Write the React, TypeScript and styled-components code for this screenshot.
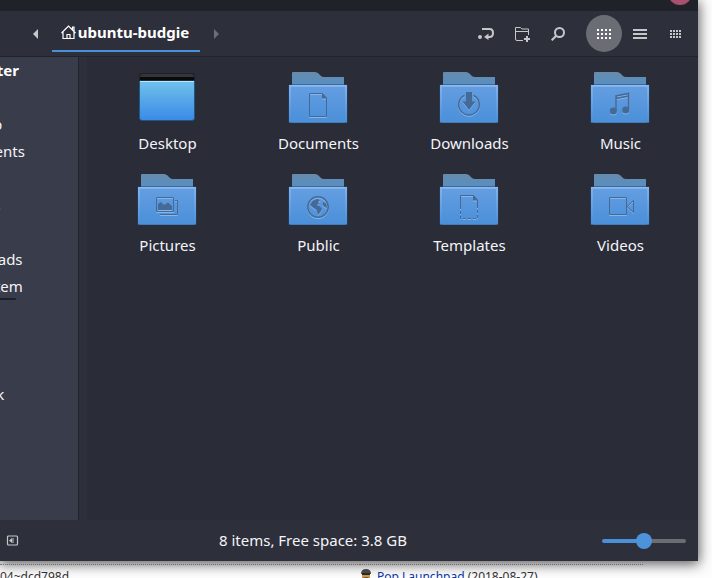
import React, { useState } from "react";
import styled, { createGlobalStyle } from "styled-components";

const GlobalStyle = createGlobalStyle`
  * { box-sizing: border-box; }
  html, body { margin: 0; height: 100%; overflow: hidden; background: #fdfdfd; }
  body { font-family: "Noto Sans", "Open Sans", sans-serif; font-size: 15px; line-height: 21px; color: #f4f5f8; }
  button { border: 0; padding: 0; background: none; color: inherit; font: inherit; }
`;

const Screen = styled.div`
  height: 100vh;
  display: flex;
  flex-direction: column;
  overflow: hidden;
`;

const Window = styled.main`
  flex: 1;
  min-height: 0;
  margin-right: 14px;
  display: flex;
  flex-direction: column;
  background: #2a2c37;
  box-shadow: 0 2px 12px 1px rgba(0, 0, 0, 0.65);
  z-index: 1;
`;

const TitleBar = styled.header`
  height: 11px;
  flex: none;
  display: flex;
  justify-content: flex-end;
  align-items: flex-end;
  padding: 0 6px 6px 0;
  overflow: hidden;
  background: #20222a;
`;

const CloseButton = styled.button`
  flex: none;
  width: 24px;
  height: 24px;
  border-radius: 50%;
  background: #a9506f;
`;

const Toolbar = styled.nav`
  flex: none;
  height: 46px;
  display: flex;
  padding: 0 4px 0 20px;
  background: #2d2f3a;
  border-bottom: 1px solid #21232b;
`;

const ArrowButton = styled.button<{ $dim?: boolean }>`
  width: 32px;
  display: flex;
  align-items: center;
  justify-content: center;
  color: ${(p) => (p.$dim ? "#6c6e75" : "#c6c7ca")};
`;

const PathTab = styled.button`
  height: 41px;
  width: 148px;
  display: flex;
  align-items: center;
  justify-content: center;
  gap: 2px;
  padding: 4px 2px 0 0;
  border-bottom: 2px solid #4a90d9;
  font-weight: 700;
  color: #fff;
`;

const Tools = styled.div`
  margin-left: auto;
  display: flex;
  align-items: center;
`;

const ToolButton = styled.button<{ $active?: boolean }>`
  width: 36px;
  height: 37px;
  display: flex;
  align-items: center;
  justify-content: center;
  border-radius: 50%;
  color: ${(p) => (p.$active ? "#fff" : "#c6c7ca")};
  background: ${(p) => (p.$active ? "#6b6d75" : "transparent")};
`;

const ViewGroup = styled.div`
  display: flex;
  margin-left: 10px;
`;

const Body = styled.div`
  flex: 1;
  min-height: 0;
  display: flex;
`;

const Sidebar = styled.aside`
  width: 79px;
  flex: none;
  overflow: hidden;
  background: #393c4a;
  border-right: 1px solid #22242c;
`;

const PlaceList = styled.ul`
  list-style: none;
  width: 132px;
  margin: 0 0 0 -56px;
  padding: 0;
`;

const PlaceHeading = styled.h2`
  margin: 0;
  font-size: 15px;
  line-height: 27px;
  font-weight: 700;
  color: #fff;
`;

const PlaceRow = styled.li`
  height: 27px;
  line-height: 27px;
  white-space: nowrap;
`;

const DiskUsage = styled.div`
  width: 72px;
  height: 2px;
  margin-top: -2px;
  border-radius: 1px;
  background: #1e2027;
`;

const Gutter = styled.div`
  width: 8px;
  flex: none;
  background: #2d2f3a;
`;

const Files = styled.section`
  flex: 1;
  display: grid;
  grid-template-columns: repeat(4, 1fr);
  align-content: start;
  gap: 10px 0;
  padding: 9px 2px 0 5px;
`;

const FileItem = styled.button`
  height: 92px;
  display: flex;
  flex-direction: column;
  align-items: center;
  gap: 3px;
`;

const StatusBar = styled.footer`
  flex: none;
  height: 41px;
  display: flex;
  align-items: center;
  padding: 0 12px 0 6px;
  background: #2d2f3a;
`;

const PanelToggle = styled.button`
  width: 18px;
  height: 18px;
  display: flex;
  align-items: center;
`;

const StatusText = styled.span`
  flex: 1;
  text-align: center;
`;

const ZoomSlider = styled.input`
  appearance: none;
  width: 84px;
  height: 16px;
  margin: 0;
  background: transparent;
  &::-webkit-slider-runnable-track {
    height: 4px;
    border-radius: 2px;
    background: linear-gradient(to right, #4a90d9 50%, #6b6d75 50%);
  }
  &::-webkit-slider-thumb {
    appearance: none;
    width: 16px;
    height: 16px;
    margin-top: -6px;
    border-radius: 50%;
    background: #4d93dc;
  }
`;

const PageStrip = styled.div`
  flex: none;
  height: 17px;
  padding-top: 3px;
  display: grid;
  grid-template-columns: 360px 1fr;
  overflow: hidden;
  font-size: 12px;
  line-height: 18px;
  color: #333;
  white-space: nowrap;
`;

const PageCell = styled.div`
  display: flex;
  gap: 4px;
  padding-top: 3px;
  border-top: 1px dotted #999;
  &:last-child { margin-right: 69px; }
  a { color: #0b35a8; text-decoration: none; }
`;

const glyphInk = "#456a96";
const glyphShine = "#86b5ec";

type Kind = "desktop" | "doc" | "down" | "music" | "pics" | "globe" | "template" | "video";

function Glyph({ kind, ink }: { kind: Kind; ink: string }) {
  switch (kind) {
    case "doc":
      return <><path d="M22.5 27.5H35.5L39.5 32V50.5H22.5Z" fill="none" /><path d="M35 27V32.5H40Z" fill={ink} stroke="none" /></>;
    case "down":
      return (
        <>
          <path d="M26.5 29.4A10.3 10.3 0 1 0 35.5 29.4" fill="none" strokeWidth="1.5" />
          <path d="M28 26H34V35.5H37.5L31 44L24.5 35.5H28Z" fill={ink} stroke="none" />
        </>
      );
    case "music":
      return (
        <>
          <path d="M27 45V30L39.5 27.5V44M27 32.5L39.5 30" fill="none" strokeWidth="1.6" />
          <circle cx="24.3" cy="45" r="3.6" fill={ink} stroke="none" />
          <circle cx="36.7" cy="44" r="3.6" fill={ink} stroke="none" />
        </>
      );
    case "pics":
      return (
        <>
          <path d="M20.5 29.5H37.5V43.5H20.5ZM39 32.5H41.5V46.5H24" fill="none" />
          <path d="M22 42V36L25 34L28 37L32 34.5L36 38V42Z" fill={ink} stroke="none" />
        </>
      );
    case "globe":
      return (
        <>
          <circle cx="31" cy="39" r="10.2" fill="none" strokeWidth="1.5" />
          <path d="M30 31L33 32L31 34L32 36L29.5 37L33 38.5L35 41L33.5 44L31 47L29.5 42L26.5 40L23 37L25.5 33ZM36 34L39 35.5L40 40L37.5 39L35.5 36.5Z" fill={ink} stroke="none" />
        </>
      );
    case "template":
      return (
        <>
          <path d="M22.5 38V27.5H35.5L39.5 32V38" fill="none" />
          <path d="M22.5 38V50.5H39.5V38" fill="none" strokeDasharray="3 2" />
          <path d="M35 27V32.5H40Z" fill={ink} stroke="none" />
        </>
      );
    case "video":
      return <path d="M20.5 29.5H37.5V46.5H20.5ZM38 38.5L44.5 32.5V44.5Z" fill="none" />;
    default:
      return null;
  }
}

function FileIcon({ kind }: { kind: Kind }) {
  if (kind === "desktop") {
    return (
      <svg width="63" height="64" viewBox="0 0 63 64" aria-hidden="true">
        <defs>
          <linearGradient id="screen" x1="0" y1="0" x2="0" y2="1">
            <stop offset="0" stopColor="#70c1ec" />
            <stop offset="1" stopColor="#3a8ae6" />
          </linearGradient>
        </defs>
        <rect x="3" y="7" width="56" height="48" rx="3" fill="#1d2028" />
        <path d="M4 11Q4 8 7 8H55Q58 8 58 11Z" fill="#353535" />
        <path d="M4 11H58V15H4Z" fill="#0a0a0a" />
        <path d="M3.5 15H58.5V52Q58.5 54.5 56 54.5H6Q3.5 54.5 3.5 52Z" fill="url(#screen)" stroke="#1f5783" />
        <path d="M4 15.5H58" stroke="#bfe4f8" />
      </svg>
    );
  }
  return (
    <svg width="63" height="64" viewBox="0 0 63 64" aria-hidden="true">
      <defs>
        <linearGradient id="tab" x1="0" y1="0" x2="0" y2="1">
          <stop offset="0" stopColor="#668bab" />
          <stop offset="1" stopColor="#568fc5" />
        </linearGradient>
        <linearGradient id="front" x1="0" y1="0" x2="0" y2="1">
          <stop offset="0" stopColor="#649de1" />
          <stop offset="1" stopColor="#4a90d9" />
        </linearGradient>
        <linearGradient id="edge" x1="0" y1="0" x2="0" y2="1">
          <stop offset="0" stopColor="#83b3ec" />
          <stop offset="1" stopColor="#4a90d9" />
        </linearGradient>
      </defs>
      <path d="M5 7Q5 6 6 6H28Q30 6 31.5 7.5L34 10Q35 11 37 11H57V20H5Z" fill="url(#tab)" />
      <rect x="1.5" y="18.5" width="59" height="38.5" rx="1" fill="#24456b" />
      <rect x="2" y="19" width="58" height="37.5" fill="url(#edge)" />
      <path d="M2 19.5H60" stroke="#8db9ee" />
      <rect x="4" y="21" width="54" height="35.5" fill="url(#front)" />
      <g transform="translate(0 1)" stroke={glyphShine}><Glyph kind={kind} ink={glyphShine} /></g>
      <g stroke={glyphInk}><Glyph kind={kind} ink={glyphInk} /></g>
    </svg>
  );
}

function Dots({ size, step, pad = 0 }: { size: number; step: number; pad?: number }) {
  const cells = [];
  for (let r = 0; r < 3; r++) {
    for (let c = 0; c < 4; c++) {
      cells.push(<rect key={`${r}-${c}`} x={c * step} y={r * step} width={size} height={size} />);
    }
  }
  const w = step * 3 + size + pad;
  const h = step * 2 + size;
  return <svg width={w} height={h} viewBox={`0 0 ${w} ${h}`} fill="currentColor" shapeRendering="crispEdges" aria-hidden="true">{cells}</svg>;
}

const files: { name: string; kind: Kind }[] = [
  { name: "Desktop", kind: "desktop" },
  { name: "Documents", kind: "doc" },
  { name: "Downloads", kind: "down" },
  { name: "Music", kind: "music" },
  { name: "Pictures", kind: "pics" },
  { name: "Public", kind: "globe" },
  { name: "Templates", kind: "template" },
  { name: "Videos", kind: "video" },
];

const places = ["", "Desktop", "Documents", "", "Pictures", "", "Downloads", "File System", "", "", "", "Network"];

export default function App() {
  const [zoom, setZoom] = useState(50);
  return (
    <Screen>
      <GlobalStyle />
      <Window>
        <TitleBar><CloseButton aria-label="Close" /></TitleBar>
        <Toolbar>
          <ArrowButton aria-label="Back">
            <svg width="6" height="10" viewBox="0 0 6 10" fill="currentColor"><path d="M5 0V10L0 5Z" /></svg>
          </ArrowButton>
          <PathTab>
            <svg width="15" height="15" viewBox="0 0 15 15" fill="none" stroke="currentColor" strokeWidth="1.2">
              <path d="M.5 8L7.5 1L14.5 8M2 7V13.5H13V7M11.5 5V2H13V6.5M6 13.5V9.5H9V13.5" />
            </svg>
            ubuntu-budgie
          </PathTab>
          <ArrowButton aria-label="Forward" $dim>
            <svg width="5" height="10" viewBox="0 0 5 10" fill="currentColor"><path d="M0 0V10L5 5Z" /></svg>
          </ArrowButton>
          <Tools>
            <ToolButton aria-label="Toggle location entry">
              <svg width="16" height="12" viewBox="0 0 16 12" fill="none" stroke="currentColor" strokeWidth="2">
                <path d="M4 1H11.5Q15 1 15 5Q15 9 11.5 9H9" />
                <path d="M10.5 5.5V12L6 9Z" fill="currentColor" stroke="none" />
                <circle cx="2" cy="9" r="2" fill="currentColor" stroke="none" />
              </svg>
            </ToolButton>
            <ToolButton aria-label="New folder">
              <svg width="16" height="16" viewBox="0 0 16 16" fill="none" stroke="currentColor">
                <path d="M9 14.5H3Q1.5 14.5 1.5 13V1.5H6.5L8 3H14.5V9M1.5 5.5H14.5" />
                <path d="M13 10V16M10 13H16" strokeWidth="2" />
              </svg>
            </ToolButton>
            <ToolButton aria-label="Search">
              <svg width="14" height="14" viewBox="0 0 14 14" fill="none" stroke="currentColor" strokeWidth="2">
                <circle cx="8.5" cy="5.5" r="4.5" /><path d="M5.5 8.5L.7 13.3" />
              </svg>
            </ToolButton>
            <ViewGroup>
              <ToolButton aria-label="Icon view" $active><Dots size={2} step={4} /></ToolButton>
              <ToolButton aria-label="List view">
                <svg width="14" height="10" viewBox="0 0 14 10" fill="currentColor"><path d="M0 0H14V2H0ZM0 4H14V6H0ZM0 8H14V10H0Z" /></svg>
              </ToolButton>
              <ToolButton aria-label="Compact view"><Dots size={2} step={3} pad={1} /></ToolButton>
            </ViewGroup>
          </Tools>
        </Toolbar>
        <Body>
          <Sidebar>
            <PlaceList>
              <li><PlaceHeading>Computer</PlaceHeading></li>
              {places.map((name, i) => (
                <PlaceRow key={i}>
                  {name}
                  {name === "File System" && <DiskUsage />}
                </PlaceRow>
              ))}
            </PlaceList>
          </Sidebar>
          <Gutter />
          <Files>
            {files.map((f) => (
              <FileItem key={f.name}><FileIcon kind={f.kind} />{f.name}</FileItem>
            ))}
          </Files>
        </Body>
        <StatusBar>
          <PanelToggle aria-label="Toggle sidebar">
            <svg width="13" height="11" viewBox="0 0 13 11" fill="none" stroke="#c6c7ca">
              <rect x="1.5" y="1" width="10" height="9" rx="1" strokeWidth="1.2" />
              <path d="M6 3V8L3 5.5Z" fill="#c6c7ca" stroke="none" /><path d="M7 3V8" />
            </svg>
          </PanelToggle>
          <StatusText>8 items, Free space: 3.8 GB</StatusText>
          <ZoomSlider type="range" min={0} max={100} value={zoom} onChange={(e) => setZoom(Number(e.target.value))} aria-label="Zoom level" />
        </StatusBar>
      </Window>
      <PageStrip>
        <PageCell>04~dcd798d</PageCell>
        <PageCell>
          <svg width="13" height="14" viewBox="0 0 13 14" aria-hidden="true">
            <path d="M1 6Q1 1 6 1Q11 1 11 6Z" fill="#4a4e50" />
            <path d="M2 6H10V10H2Z" fill="#c99a55" /><path d="M2 5H10V7H2Z" fill="#302c28" />
            <path d="M0 14Q2 9 6 9Q10 9 12 14Z" fill="#725330" />
          </svg>
          <span><a href="#launchpad">Pop Launchpad</a> (2018-08-27)</span>
        </PageCell>
      </PageStrip>
    </Screen>
  );
}
